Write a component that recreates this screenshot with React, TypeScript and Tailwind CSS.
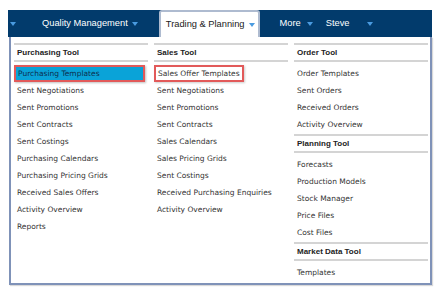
const columns: { title: string; items: string[] }[][] = [
  [{ title: "Purchasing Tool", items: ["Purchasing Templates", "Sent Negotiations", "Sent Promotions", "Sent Contracts", "Sent Costings", "Purchasing Calendars", "Purchasing Pricing Grids", "Received Sales Offers", "Activity Overview", "Reports"] }],
  [{ title: "Sales Tool", items: ["Sales Offer Templates", "Sent Negotiations", "Sent Promotions", "Sent Contracts", "Sales Calendars", "Sales Pricing Grids", "Sent Costings", "Received Purchasing Enquiries", "Activity Overview"] }],
  [
    { title: "Order Tool", items: ["Order Templates", "Sent Orders", "Received Orders", "Activity Overview"] },
    { title: "Planning Tool", items: ["Forecasts", "Production Models", "Stock Manager", "Price Files", "Cost Files"] },
    { title: "Market Data Tool", items: ["Templates"] },
  ],
];

function Caret() {
  return <span className="block w-0 h-0 border-l-[3px] border-r-[3px] border-t-[4px] border-l-transparent border-r-transparent border-t-[#4a9be0]" />;
}

function Item({ label }: { label: string }) {
  if (label === "Purchasing Templates") {
    return (
      <div className="h-[17px] w-[131px] flex items-center px-[2px] bg-[#0aa3d8] border-2 border-[#e25a5a] shadow-[1px_1px_2px_rgba(0,0,0,0.25)] text-[#0d2f4f]">
        {label}
      </div>
    );
  }
  if (label === "Sales Offer Templates") {
    return (
      <div className="h-[17px] flex items-center px-[2px] w-fit border-2 border-[#e25a5a] shadow-[1px_1px_2px_rgba(0,0,0,0.2)]">
        {label}
      </div>
    );
  }
  return <div className="h-[17px] flex items-center px-[3px] whitespace-nowrap">{label}</div>;
}

export default function App() {
  return (
    <div className="w-[448px] h-[296px] bg-white pt-[10px] pl-[8px] font-['Liberation_Sans',Arial,sans-serif]">
      <div className="w-[424px] h-[27px] bg-[#023b6c] flex items-center text-white text-[9.3px] whitespace-nowrap">
        <span className="ml-[2px]"><Caret /></span>
        <span className="ml-[26px]">Quality Management</span>
        <span className="ml-[4px]"><Caret /></span>
        <div className="ml-[21px] h-[27px] bg-white rounded-t-[3px] border-2 border-b-0 border-[#aebbd0] flex items-center text-[#1a1a1a] pl-[5px] pr-[3px]">
          <span>Trading &amp; Planning</span>
          <span className="ml-[4px]"><Caret /></span>
        </div>
        <span className="ml-[20px]">More</span>
        <span className="ml-[6px]"><Caret /></span>
        <span className="ml-[13px]">Steve</span>
        <span className="ml-[17px]"><Caret /></span>
      </div>
      <div className="ml-[1px] w-[423px] h-[248px] border-l-2 border-r-2 border-b-2 border-[#7f92b8] shadow-[1px_1px_1px_rgba(0,0,0,0.15)] pl-[3px] pt-[6px] flex gap-[6px]">
        {columns.map((sections, ci) => (
          <div key={ci} className="w-[134px] flex flex-col">
            {sections.map((s, si) => (
              <div key={si} className={si > 0 ? "mt-[1px]" : ""}>
                <div className="h-[2px] bg-[#d4d4d4]" />
                <div className="h-[15px] flex items-center px-[3px] text-[8px] font-bold text-[#222]">{s.title}</div>
                <div className="h-[2px] bg-[#d4d4d4]" />
                <div className="pt-[3px] text-[7.5px] text-[#333] font-['DejaVu_Sans',Verdana,sans-serif]">
                  {s.items.map((it) => (
                    <Item key={it} label={it} />
                  ))}
                </div>
              </div>
            ))}
          </div>
        ))}
      </div>
    </div>
  );
}
